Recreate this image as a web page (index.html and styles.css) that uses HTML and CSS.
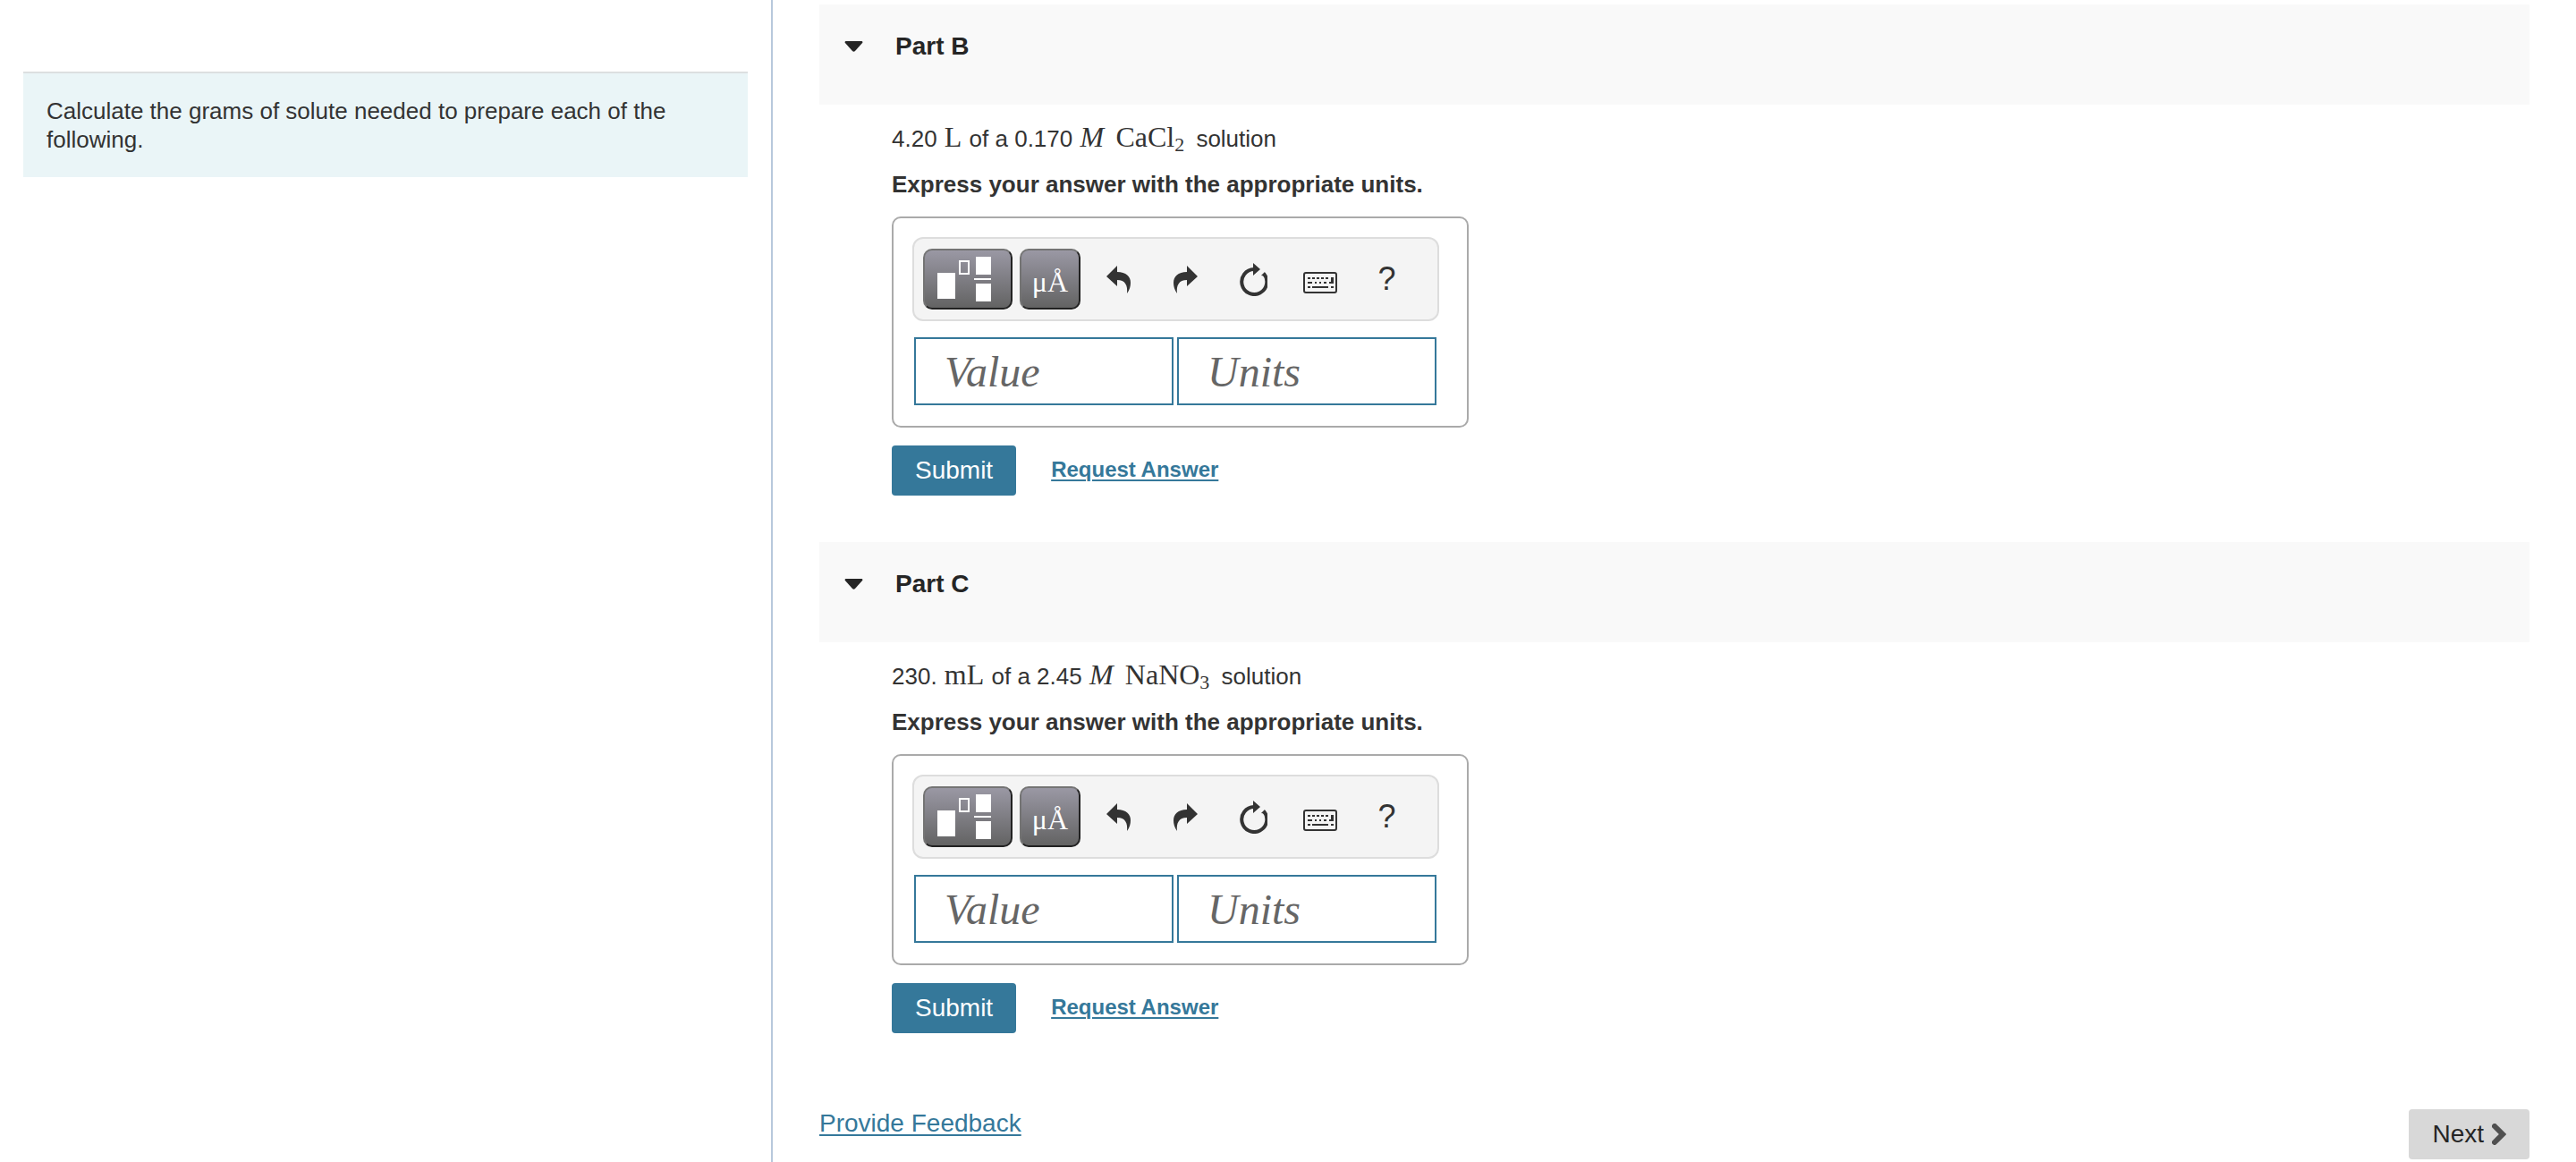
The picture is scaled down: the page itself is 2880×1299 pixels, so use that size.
FILE: index.html
```html
<!DOCTYPE html>
<html lang="en">

<head>
    <meta charset="UTF-8">
    <meta name="viewport" content="width=device-width, initial-scale=1.0">
    <title>Solution Preparation</title>
    <link rel="stylesheet" href="styles.css">
</head>

<body>
    <!-- shared icons -->
    <svg class="icon-defs" aria-hidden="true">
        <symbol id="icon-arrow" viewBox="0 0 20 12">
            <path d="M1 0h18q1.500 .6.600 2L11.500 11q-1.500 1.600-3 0L.4 2Q-.5.600 1 0z" />
        </symbol>
        <symbol id="icon-template" viewBox="0 0 60 50">
            <path d="M0 18h20v29H0zM43 0h17v20H43zM41 24h20v2H41zM43 30h17v20H43z" />
            <path d="M25 5h10v14H25z" fill="none" stroke="currentColor" stroke-width="2" />
        </symbol>
        <symbol id="icon-undo" viewBox="0 0 27 31">
            <path d="M0 12L12 0v7C22 7 27 12 27 19c0 4-1 8-4 12 1-9-2-15-11-15v7z" />
        </symbol>
        <symbol id="icon-redo" viewBox="0 0 27 31">
            <path d="M27 12L15 0v7C5 7 0 12 0 19c0 4 1 8 4 12-1-9 2-15 11-15v7z" />
        </symbol>
        <symbol id="icon-reset" viewBox="0 0 32 37">
            <path d="M17 7A14 14 0 1 0 28 12" fill="none" stroke="currentColor" stroke-width="4" />
            <path d="M16 0l8 7-8 7zM25 14l4-4 2 5z" />
        </symbol>
        <symbol id="icon-keyboard" viewBox="0 0 38 24">
            <rect x="1" y="1" width="36" height="22" rx="2" fill="none" stroke="currentColor" stroke-width="2" />
            <path d="M5 6h3v2H5zM10 6h3v2h-3zM15 6h3v2h-3zM20 6h3v2h-3zM25 6h3v2h-3zM31 6h3v7h-5v-2h2zM5 11h5v2H5zM13 11h2v2h-2zM18 11h2v2h-2zM23 11h3v2h-3zM5 16h3v2H5zM10 16h18v2H10zM31 16h3v2h-3z" />
        </symbol>
        <symbol id="icon-next" viewBox="0 0 16 24">
            <path d="M3 3l9 9-9 9" fill="none" stroke="currentColor" stroke-width="6" stroke-linecap="round" />
        </symbol>
    </svg>

    <div class="page">
        <aside class="sidebar">
            <p class="intro">Calculate the grams of solute needed to prepare each of the following.</p>
        </aside>

        <main class="content">
            <!-- Part B -->
            <section class="part">
                <h2 class="part-header">
                    <button type="button" class="part-toggle" aria-expanded="true">
                        <svg class="arrow"><use href="#icon-arrow" /></svg>Part B
                    </button>
                </h2>
                <form class="part-body">
                    <p class="question">4.20 <span class="math">L</span> of a 0.170 <i class="math molar">M</i> <span class="math formula">CaCl<sub>2</sub></span> solution</p>
                    <p class="instruction">Express your answer with the appropriate units.</p>
                    <div class="answer-box">
                        <div class="toolbar">
                            <button type="button" class="tool-dark tool-template" aria-label="Templates"><svg><use href="#icon-template" /></svg></button>
                            <button type="button" class="tool-dark tool-units">μÅ</button>
                            <button type="button" class="tool" aria-label="Undo"><svg class="icon-turn"><use href="#icon-undo" /></svg></button>
                            <button type="button" class="tool" aria-label="Redo"><svg class="icon-turn"><use href="#icon-redo" /></svg></button>
                            <button type="button" class="tool" aria-label="Reset"><svg class="icon-reset"><use href="#icon-reset" /></svg></button>
                            <button type="button" class="tool" aria-label="Keyboard shortcuts"><svg class="icon-keyboard"><use href="#icon-keyboard" /></svg></button>
                            <button type="button" class="tool">?</button>
                        </div>
                        <div class="fields">
                            <input type="text" class="field" placeholder="Value" aria-label="Value">
                            <input type="text" class="field" placeholder="Units" aria-label="Units">
                        </div>
                    </div>
                    <div class="actions">
                        <button type="button" class="submit">Submit</button>
                        <a href="#" class="request">Request Answer</a>
                    </div>
                </form>
            </section>

            <!-- Part C -->
            <section class="part">
                <h2 class="part-header">
                    <button type="button" class="part-toggle" aria-expanded="true">
                        <svg class="arrow"><use href="#icon-arrow" /></svg>Part C
                    </button>
                </h2>
                <form class="part-body">
                    <p class="question">230. <span class="math">mL</span> of a 2.45 <i class="math molar">M</i> <span class="math formula">NaNO<sub>3</sub></span> solution</p>
                    <p class="instruction">Express your answer with the appropriate units.</p>
                    <div class="answer-box">
                        <div class="toolbar">
                            <button type="button" class="tool-dark tool-template" aria-label="Templates"><svg><use href="#icon-template" /></svg></button>
                            <button type="button" class="tool-dark tool-units">μÅ</button>
                            <button type="button" class="tool" aria-label="Undo"><svg class="icon-turn"><use href="#icon-undo" /></svg></button>
                            <button type="button" class="tool" aria-label="Redo"><svg class="icon-turn"><use href="#icon-redo" /></svg></button>
                            <button type="button" class="tool" aria-label="Reset"><svg class="icon-reset"><use href="#icon-reset" /></svg></button>
                            <button type="button" class="tool" aria-label="Keyboard shortcuts"><svg class="icon-keyboard"><use href="#icon-keyboard" /></svg></button>
                            <button type="button" class="tool">?</button>
                        </div>
                        <div class="fields">
                            <input type="text" class="field" placeholder="Value" aria-label="Value">
                            <input type="text" class="field" placeholder="Units" aria-label="Units">
                        </div>
                    </div>
                    <div class="actions">
                        <button type="button" class="submit">Submit</button>
                        <a href="#" class="request">Request Answer</a>
                    </div>
                </form>
            </section>

            <footer class="footer">
                <a href="#" class="feedback">Provide Feedback</a>
                <button type="button" class="next">Next <svg><use href="#icon-next" /></svg></button>
            </footer>
        </main>
    </div>
</body>

</html>
```
FILE: styles.css
```css
* {
    box-sizing: border-box;
}

body {
    margin: 0;
    background: #fff;
    color: #333;
    font-family: "Liberation Sans", Arial, sans-serif;
    font-size: 26px;
    line-height: 32px;
}

button {
    margin: 0;
    font-family: inherit;
    cursor: pointer;
}

p {
    margin: 0;
}

svg {
    display: block;
    fill: currentColor;
}

a {
    color: #35789a;
    text-underline-offset: 3px;
    text-decoration-thickness: 2px;
}

.icon-defs {
    display: none;
}

.page {
    display: flex;
    min-height: 100vh;
}

/* left side */
.sidebar {
    width: 30%;
    padding: 80px 26px 0;
    border-right: 2px solid #b8c8dc;
}

.intro {
    padding: 26px;
    border-top: 2px solid #dcdfe0;
    background: #eaf5f7;
}

/* right side */
.content {
    flex: 1;
    padding: 5px 52px 0;
}

.part {
    margin-bottom: 52px;
}

.part-header {
    height: 112px;
    margin: 0;
    padding: 31px 28px;
    background: #f9f9f9;
}

.part-toggle {
    display: flex;
    align-items: center;
    gap: 36px;
    padding: 0;
    border: 0;
    background: none;
    color: #252525;
    font-size: 28px;
    font-weight: bold;
    line-height: 32px;
}

.arrow {
    width: 21px;
    height: 12px;
}

.part-body {
    padding: 20px 81px 0;
}

.question {
    line-height: 36px;
}

.math {
    margin: 0 1px;
    font-family: "Liberation Serif", "Times New Roman", serif;
    font-size: 32px;
    line-height: 1;
}

.molar {
    margin-right: 5px;
}

.formula {
    margin-right: 6px;
}

.math sub {
    font-size: 22px;
    line-height: 0;
    vertical-align: -5px;
}

.instruction {
    margin: 17px 0 20px;
    font-weight: bold;
}

.answer-box {
    width: 645px;
    padding: 21px;
    border: 2px solid #aaa;
    border-radius: 10px;
}

.toolbar {
    display: flex;
    align-items: center;
    width: 589px;
    height: 94px;
    padding: 0 10px;
    border: 2px solid #ddd;
    border-radius: 12px;
    background: #f4f4f4;
}

.tool-dark {
    display: flex;
    align-items: center;
    justify-content: center;
    height: 68px;
    margin-right: 8px;
    padding: 0;
    border: 2px solid;
    border-color: #747474 #222 #222 #747474;
    border-radius: 10px;
    background: linear-gradient(#9a98a4, #636363);
    color: #fff;
}

.tool-template {
    width: 100px;
    padding-right: 8px;
}

.tool-template svg {
    width: 60px;
    height: 50px;
    overflow: visible;
}

.tool-units {
    width: 68px;
    margin-right: 5px;
    padding-top: 6px;
    font-family: "Liberation Serif", "Times New Roman", serif;
    font-size: 32px;
}

.tool {
    display: flex;
    align-items: center;
    justify-content: center;
    width: 75px;
    height: 68px;
    padding: 0;
    border: 0;
    background: none;
    color: #333;
    font-size: 36px;
}

.icon-turn {
    width: 27px;
    height: 31px;
}

.icon-reset {
    width: 32px;
    height: 37px;
}

.icon-keyboard {
    width: 38px;
    height: 24px;
    margin-top: 8px;
}

.fields {
    display: flex;
    gap: 4px;
    margin: 18px 0 2px;
    padding-left: 2px;
}

.field {
    width: 290px;
    height: 76px;
    padding: 0 32px;
    border: 2px solid #35789a;
    border-radius: 0;
    background: #fff;
    color: #333;
    font-family: "Liberation Serif", "Times New Roman", serif;
    font-size: 48px;
    font-style: italic;
}

.field::placeholder {
    color: #666;
    opacity: 1;
}

.actions {
    display: flex;
    align-items: center;
    gap: 39px;
    margin-top: 20px;
}

.submit,
.next {
    height: 56px;
    padding: 0 26px;
    border: 0;
    border-radius: 4px;
    font-size: 28px;
}

.submit {
    background: #35789a;
    color: #fff;
}

.request {
    padding-bottom: 2px;
    font-size: 24px;
    font-weight: bold;
}

.footer {
    display: flex;
    align-items: flex-start;
    justify-content: space-between;
    padding-top: 33px;
}

.feedback {
    font-size: 28px;
}

.next {
    display: flex;
    align-items: center;
    gap: 9px;
    background: #d8d8d8;
    color: #252525;
}

.next svg {
    width: 16px;
    height: 24px;
    color: #505050;
}
```
